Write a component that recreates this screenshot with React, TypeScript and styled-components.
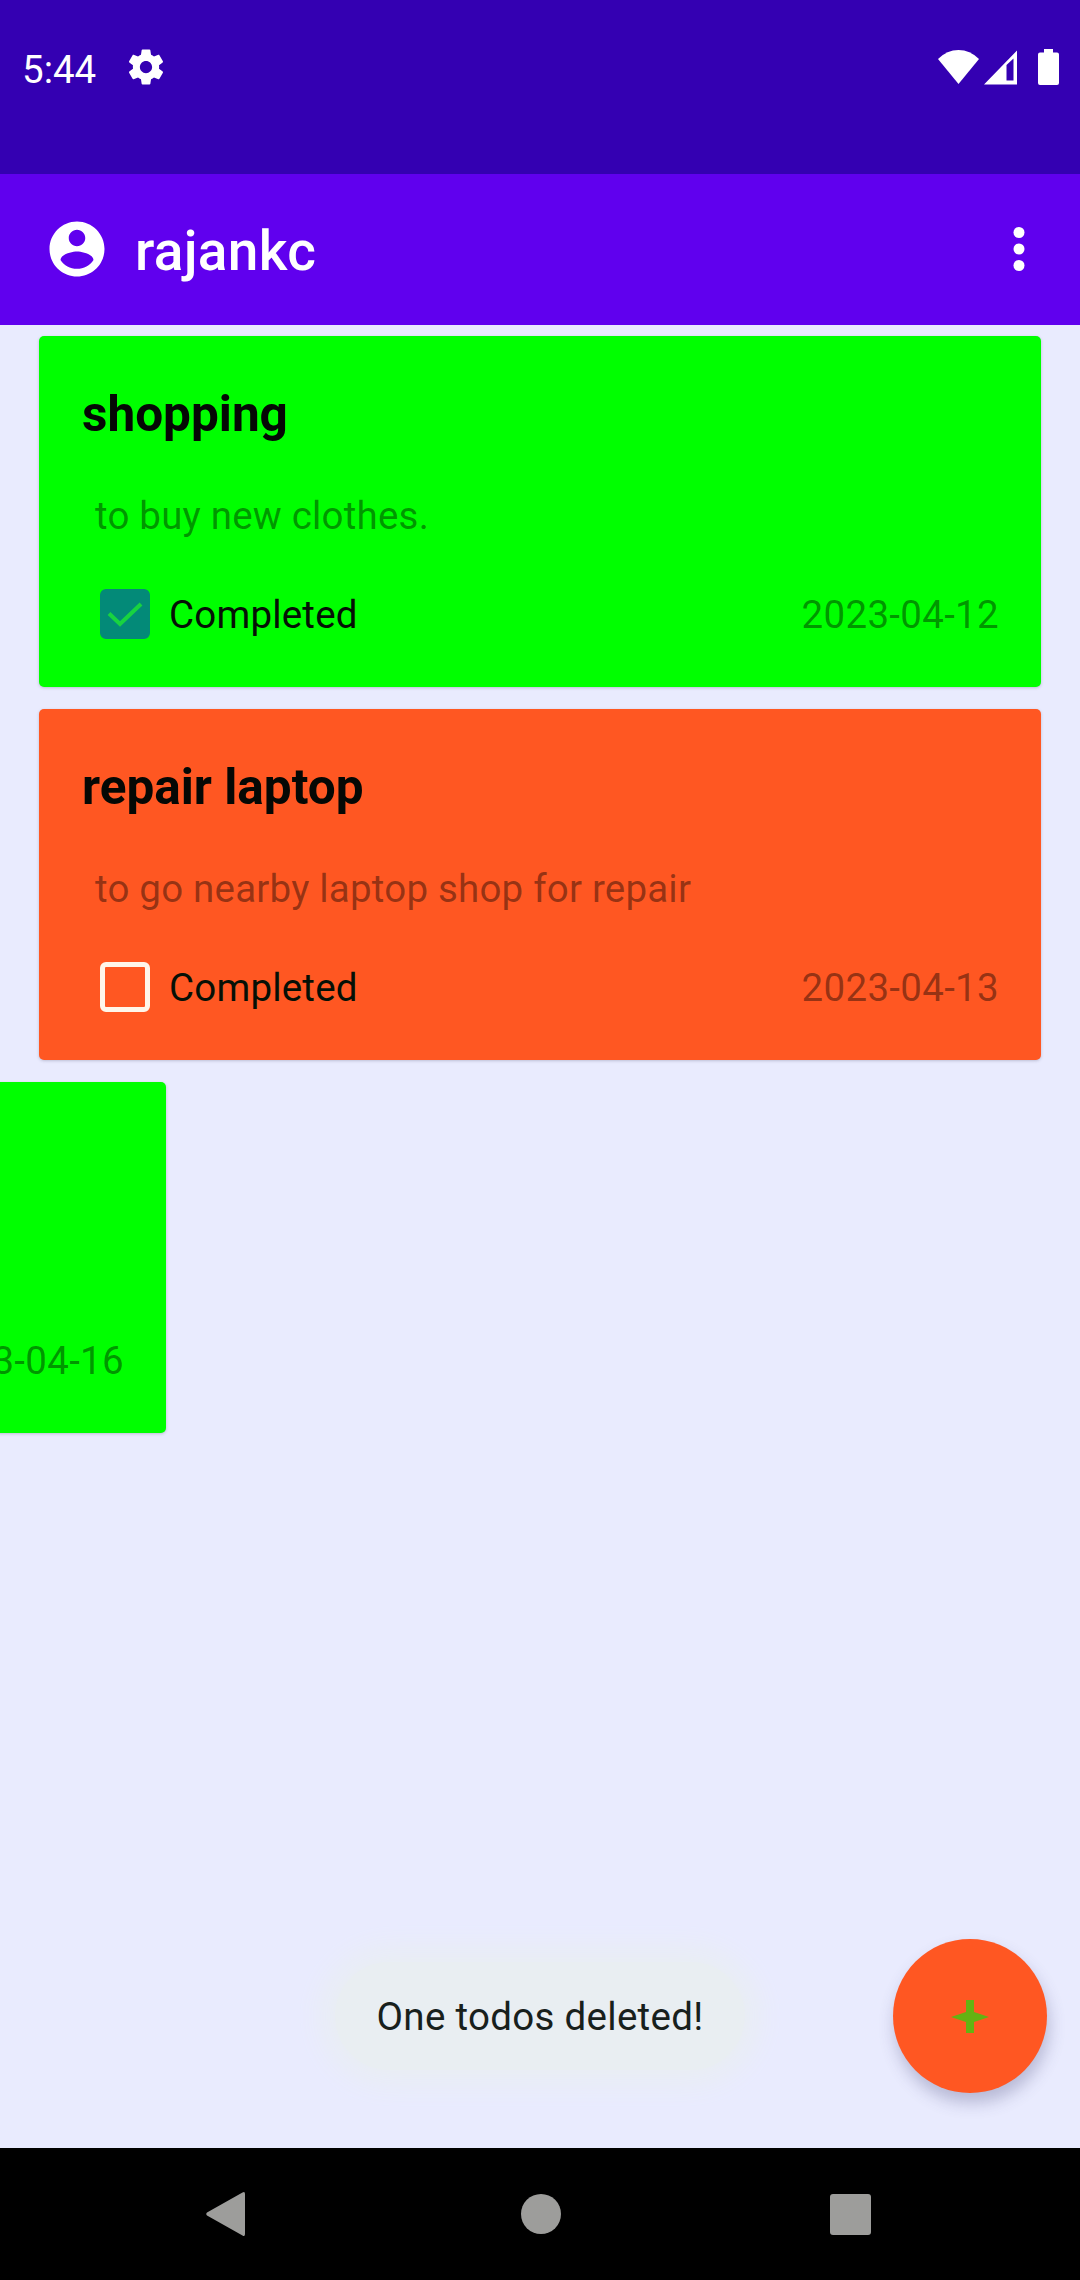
import React from "react";
import styled, { createGlobalStyle } from "styled-components";

const GlobalStyle = createGlobalStyle`
  *, *::before, *::after { box-sizing: border-box; }
  html, body { margin: 0; padding: 0; }
  body { font-family: Roboto, "Noto Sans", sans-serif; }
`;

const Screen = styled.div`
  position: relative;
  width: 1080px;
  height: 2280px;
  display: flex;
  flex-direction: column;
  overflow: hidden;
  background: #e9ebfe;
`;

const StatusBar = styled.header`
  display: flex;
  justify-content: space-between;
  height: 174px;
  padding: 46px 21px 0 22px;
  background: #3400b2;
  color: #fff;
`;

const StatusGroup = styled.div<{ $gap: number }>`
  display: flex;
  align-items: center;
  gap: ${({ $gap }) => $gap}px;
  height: 42px;
`;

const Clock = styled.span`
  margin-top: 5px;
  font-size: 38.5px;
  line-height: 46px;
`;

const AppBar = styled.div`
  display: flex;
  align-items: center;
  height: 151px;
  padding: 0 28px 2px 44px;
  background: #6000ee;
  color: #fff;
`;

const AppTitle = styled.h1`
  flex: 1;
  margin: 5px 0 0 25px;
  font-size: 55px;
  font-weight: 500;
  line-height: 64px;
  letter-spacing: 0.3px;
`;

const List = styled.main`
  flex: 1;
  display: flex;
  flex-direction: column;
  gap: 22px;
  padding: 11px 39px 0;
  overflow: hidden;
`;

const Card = styled.article<{ $color: string; $shift?: number }>`
  display: flex;
  flex-direction: column;
  flex: none;
  height: 351px;
  padding: 47px 42px 45px 43px;
  border-radius: 5px;
  background: ${({ $color }) => $color};
  box-shadow: 0 1px 3px rgba(60, 60, 90, 0.25);
  transform: translateX(${({ $shift = 0 }) => $shift}px);
`;

const CardTitle = styled.h2`
  margin: 0;
  font-size: 49.5px;
  font-weight: 700;
  line-height: 62px;
  color: #050805;
`;

const CardText = styled.p`
  margin: 48px 0 0 13px;
  font-size: 38.5px;
  line-height: 46px;
  letter-spacing: 0.2px;
  color: rgba(0, 0, 0, 0.42);
`;

const CardFooter = styled.div`
  display: flex;
  align-items: center;
  margin-top: auto;
  height: 54px;
`;

const CheckBox = styled.span<{ $checked: boolean }>`
  display: flex;
  align-items: center;
  justify-content: center;
  width: 50px;
  height: 50px;
  margin: 0 0 2px 18px;
  border: 5.5px solid ${({ $checked }) => ($checked ? "#038a78" : "#fff6ea")};
  border-radius: 6px;
  background: ${({ $checked }) => ($checked ? "#038a78" : "transparent")};
`;

const CheckLabel = styled.span`
  margin-left: 19px;
  font-size: 38.5px;
  line-height: 46px;
  letter-spacing: 0.2px;
  color: #061006;
`;

const DateText = styled.time`
  margin-left: auto;
  font-size: 38.5px;
  line-height: 46px;
  letter-spacing: 0.3px;
  color: rgba(0, 0, 0, 0.42);
`;

const Toast = styled.div`
  position: absolute;
  top: 1962px;
  left: 335px;
  width: 410px;
  height: 108px;
  display: flex;
  align-items: center;
  justify-content: center;
  border-radius: 54px;
  background: #e9eef2;
  box-shadow: 0 0 30px 12px #e9eef2;
  font-size: 38.5px;
  letter-spacing: 0.3px;
  color: #18201c;
  white-space: nowrap;
`;

const AddButton = styled.button`
  position: absolute;
  top: 1939px;
  left: 893px;
  width: 154px;
  height: 154px;
  display: flex;
  align-items: center;
  justify-content: center;
  padding: 0;
  border: 0;
  border-radius: 50%;
  background: #ff5722;
  box-shadow: 2px 10px 16px rgba(70, 70, 120, 0.3);
`;

const NavBar = styled.nav`
  display: flex;
  align-items: center;
  justify-content: space-between;
  height: 132px;
  padding: 0 209px 0 206px;
  background: #000;
`;

const GREEN = "#00ff00";
const ORANGE = "#ff5722";

type Todo = {
  title?: string;
  text?: string;
  done?: boolean;
  date: string;
  color: string;
  shift?: number;
};

const todos: Todo[] = [
  { title: "shopping", text: "to buy new clothes.", done: true, date: "2023-04-12", color: GREEN },
  { title: "repair laptop", text: "to go nearby laptop shop for repair", done: false, date: "2023-04-13", color: ORANGE },
  { date: "2023-04-16", color: GREEN, shift: -875 },
];

function TodoCard({ todo }: { todo: Todo }) {
  return (
    <Card $color={todo.color} $shift={todo.shift}>
      {todo.title && <CardTitle>{todo.title}</CardTitle>}
      {todo.text && <CardText>{todo.text}</CardText>}
      <CardFooter>
        {todo.done !== undefined && (
          <>
            <CheckBox $checked={todo.done}>
              {todo.done && (
                <svg width="36" height="26" viewBox="0 0 36 26" fill="none">
                  <path d="M2 12.5 13 23 34 3" stroke="#18d340" strokeWidth="4" />
                </svg>
              )}
            </CheckBox>
            <CheckLabel>Completed</CheckLabel>
          </>
        )}
        <DateText>{todo.date}</DateText>
      </CardFooter>
    </Card>
  );
}

export default function App() {
  return (
    <>
      <GlobalStyle />
      <Screen>
        <StatusBar>
          <StatusGroup $gap={29}>
            <Clock>5:44</Clock>
            <svg width="42" height="42" viewBox="0 0 24 24" fill="#fff">
              <path d="M19.43 12.98c.04-.32.07-.64.07-.98s-.03-.66-.07-.98l2.11-1.65c.19-.15.24-.42.12-.64l-2-3.46c-.12-.22-.39-.3-.61-.22l-2.49 1c-.52-.4-1.08-.73-1.69-.98l-.38-2.65C14.46 2.18 14.25 2 14 2h-4c-.25 0-.46.18-.49.42l-.38 2.65c-.61.25-1.17.59-1.69.98l-2.49-1c-.23-.09-.49 0-.61.22l-2 3.46c-.13.22-.07.49.12.64l2.11 1.65c-.04.32-.07.65-.07.98s.03.66.07.98l-2.11 1.65c-.19.15-.24.42-.12.64l2 3.46c.12.22.39.3.61.22l2.49-1c.52.4 1.08.73 1.69.98l.38 2.65c.03.24.24.42.49.42h4c.25 0 .46-.18.49-.42l.38-2.65c.61-.25 1.17-.59 1.69-.98l2.49 1c.23.09.49 0 .61-.22l2-3.46c.12-.22.07-.49-.12-.64l-2.11-1.65zM12 15.5c-1.93 0-3.5-1.57-3.5-3.5s1.57-3.5 3.5-3.5 3.5 1.57 3.5 3.5-1.57 3.5-3.5 3.5z" />
            </svg>
          </StatusGroup>
          <StatusGroup $gap={0}>
            <svg width="121" height="36" viewBox="0 0 121 36" fill="#fff">
              <path d="M0 10Q9 1 20.500 1T41 10L20.500 35Z" />
              <path fillRule="evenodd" d="M46 35.500 79 1.500V35.500ZM68.500 16V31.500H75.500V9.500Z" />
              <path d="M106 0h9v3.500h4a2 2 0 0 1 2 2V34a2 2 0 0 1-2 2h-17a2 2 0 0 1-2-2V5.500a2 2 0 0 1 2-2h4Z" />
            </svg>
          </StatusGroup>
        </StatusBar>
        <AppBar>
          <svg width="66" height="66" viewBox="0 0 24 24" fill="#fff">
            <path d="M12 2C6.480 2 2 6.480 2 12s4.480 10 10 10 10-4.480 10-10S17.520 2 12 2zm0 3c1.660 0 3 1.340 3 3s-1.340 3-3 3-3-1.340-3-3 1.340-3 3-3zm0 14.200c-2.500 0-4.710-1.280-6-3.220.03-1.990 4-3.080 6-3.080 1.990 0 5.970 1.090 6 3.080-1.290 1.940-3.500 3.220-6 3.220z" />
          </svg>
          <AppTitle>rajankc</AppTitle>
          <svg width="66" height="66" viewBox="0 0 24 24" fill="#fff">
            <circle cx="12" cy="6" r="2" />
            <circle cx="12" cy="12" r="2" />
            <circle cx="12" cy="18" r="2" />
          </svg>
        </AppBar>
        <List>
          {todos.map((todo) => (
            <TodoCard key={todo.date} todo={todo} />
          ))}
        </List>
        <NavBar>
          <svg width="45" height="46" viewBox="0 0 45 46" fill="#9d9d9b">
            <path d="M36.500 1.500Q39 0 39 3V43Q39 46 36.500 44.500L1 24.500Q-.5 23 1 21.500Z" />
          </svg>
          <svg width="40" height="40" viewBox="0 0 40 40" fill="#9d9d9b">
            <circle cx="20" cy="20" r="20" />
          </svg>
          <svg width="41" height="41" viewBox="0 0 41 41" fill="#9d9d9b">
            <rect width="41" height="41" rx="3" />
          </svg>
        </NavBar>
        <Toast>One todos deleted!</Toast>
        <AddButton>
          <svg width="38" height="33" viewBox="0 0 38 33" fill="#64b312">
            <path d="M15 0h8v12l15 5-15 5v11h-8V22L0 17l15-5Z" />
          </svg>
        </AddButton>
      </Screen>
    </>
  );
}
